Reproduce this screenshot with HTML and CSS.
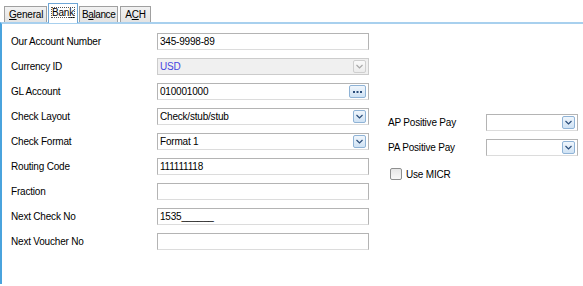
FILE: index.html
```html
<!DOCTYPE html>
<html lang="en">
<head>
  <meta charset="UTF-8" />
  <title>Bank</title>
  <link rel="stylesheet" href="styles.css">
</head>
<body>

  <div class="tabs">
    <div class="tab tab-general"><u>G</u>eneral</div>
    <div class="tab active"><span class="focus">Ban<u>k</u></span></div>
    <div class="tab tab-balance">B<u>a</u>lance</div>
    <div class="tab tab-ach">A<u>C</u>H</div>
  </div>

  <div class="panel">
    <div class="col-left">
      <div class="row">
        <label>Our Account Number</label>
        <div class="field">345-9998-89</div>
      </div>
      <div class="row">
        <label>Currency ID</label>
        <div class="field combo disabled">
          <span class="value">USD</span>
          <span class="btn"><svg width="7" height="5" viewBox="0 0 7 5"><path d="M0.5 1 L3.5 4 L6.5 1" fill="none" stroke="#a8a8a8" stroke-width="1.2"/></svg></span>
        </div>
      </div>
      <div class="row">
        <label>GL Account</label>
        <div class="field combo">
          <span class="value">010001000</span>
          <span class="btn dots"><svg width="9" height="3" viewBox="0 0 9 3"><rect x="0" y="1" width="2" height="2" fill="#2a4d7a"/><rect x="3.5" y="1" width="2" height="2" fill="#2a4d7a"/><rect x="7" y="1" width="2" height="2" fill="#2a4d7a"/></svg></span>
        </div>
      </div>
      <div class="row">
        <label>Check Layout</label>
        <div class="field combo">
          <span class="value">Check/stub/stub</span>
          <span class="btn"><svg width="7" height="5" viewBox="0 0 7 5"><path d="M0.5 1 L3.5 4 L6.5 1" fill="none" stroke="#2a4d7a" stroke-width="1.2"/></svg></span>
        </div>
      </div>
      <div class="row">
        <label>Check Format</label>
        <div class="field combo">
          <span class="value">Format 1</span>
          <span class="btn"><svg width="7" height="5" viewBox="0 0 7 5"><path d="M0.5 1 L3.5 4 L6.5 1" fill="none" stroke="#2a4d7a" stroke-width="1.2"/></svg></span>
        </div>
      </div>
      <div class="row">
        <label>Routing Code</label>
        <div class="field">111111118</div>
      </div>
      <div class="row">
        <label>Fraction</label>
        <div class="field"></div>
      </div>
      <div class="row">
        <label>Next Check No</label>
        <div class="field">1535______</div>
      </div>
      <div class="row">
        <label>Next Voucher No</label>
        <div class="field"></div>
      </div>
    </div>

    <div class="col-right">
      <div class="row">
        <label class="wide">AP Positive Pay</label>
        <div class="field combo small">
          <span class="value"></span>
          <span class="btn"><svg width="7" height="5" viewBox="0 0 7 5"><path d="M0.5 1 L3.5 4 L6.5 1" fill="none" stroke="#2a4d7a" stroke-width="1.2"/></svg></span>
        </div>
      </div>
      <div class="row">
        <label class="wide">PA Positive Pay</label>
        <div class="field combo small">
          <span class="value"></span>
          <span class="btn"><svg width="7" height="5" viewBox="0 0 7 5"><path d="M0.5 1 L3.5 4 L6.5 1" fill="none" stroke="#2a4d7a" stroke-width="1.2"/></svg></span>
        </div>
      </div>
      <div class="check-row">
        <span class="checkbox"></span>
        <span>Use MICR</span>
      </div>
    </div>
  </div>

</body>
</html>
```

FILE: styles.css
```css
body {
  margin: 0;
  background: #ffffff;
  font-family: 'Liberation Sans', Arial, sans-serif;
  font-size: 10px;
  letter-spacing: -0.2px;
  color: #000000;
  height: 286px;
  overflow: hidden;
}
.tabs {
  display: flex;
  align-items: flex-end;
  padding-left: 4px;
  height: 22px;
}
.tab {
  box-sizing: border-box;
  height: 16px;
  line-height: 15px;
  padding: 0 4px;
  text-align: center;
  border: 1px solid #a0a0a0;
  border-bottom: none;
  background: linear-gradient(#f2f2f2, #e3e3e3);
  margin-right: 2px;
}
.tab-general {
  width: 43px;
}
.tab-balance {
  width: 39px;
  padding: 0 2px;
  letter-spacing: -0.4px;
}
.tab-ach {
  width: 31px;
}
.tab.active {
  height: 20px;
  line-height: 18px;
  background: #ffffff;
  border-color: #6ea6d6;
  margin-left: -1px;
  margin-right: 1px;
  padding: 0 2px;
  position: relative;
  z-index: 1;
  margin-bottom: -1px;
}
.focus {
  outline: 1px dotted #555555;
  outline-offset: -1px;
  padding: 0 1px;
}
.panel {
  border-top: 2px solid #a8d0ee;
  border-left: 2px solid #4aa3dd;
  height: 262px;
  display: flex;
  box-sizing: border-box;
}
.col-left {
  padding: 5px 0 0 9px;
  width: 377px;
}
.col-right {
  padding-top: 86px;
}
.row {
  display: flex;
  align-items: center;
  height: 25px;
}
label {
  width: 146px;
}
label.wide {
  width: 98px;
}
.field {
  box-sizing: border-box;
  width: 212px;
  height: 17px;
  line-height: 15px;
  padding: 0 2px;
  border: 1px solid #b4b4b4;
  border-bottom-color: #dcdcdc;
  background: #ffffff;
  white-space: pre;
}
.combo {
  display: flex;
  align-items: center;
  justify-content: space-between;
  padding-right: 2px;
}
.combo.small {
  width: 92px;
}
.combo.disabled {
  background: #f0f0f0;
  border-color: #cccccc;
  color: #4646e0;
}
.btn {
  box-sizing: border-box;
  width: 13px;
  height: 13px;
  border: 1px solid #8fb3d6;
  border-radius: 2px;
  background: linear-gradient(#f0f6fc, #cfe2f4);
  display: flex;
  align-items: center;
  justify-content: center;
}
.btn.dots {
  width: 17px;
}
.disabled .btn {
  border-color: #cfcfcf;
  background: linear-gradient(#fafafa, #ececec);
}
.check-row {
  display: flex;
  align-items: center;
  gap: 4px;
  margin-top: 8px;
  padding-left: 2px;
}
.checkbox {
  box-sizing: border-box;
  width: 12px;
  height: 12px;
  border: 1px solid #8e8f8f;
  border-radius: 2px;
  background: linear-gradient(#e6e6e6, #f8f8f8);
}
```
